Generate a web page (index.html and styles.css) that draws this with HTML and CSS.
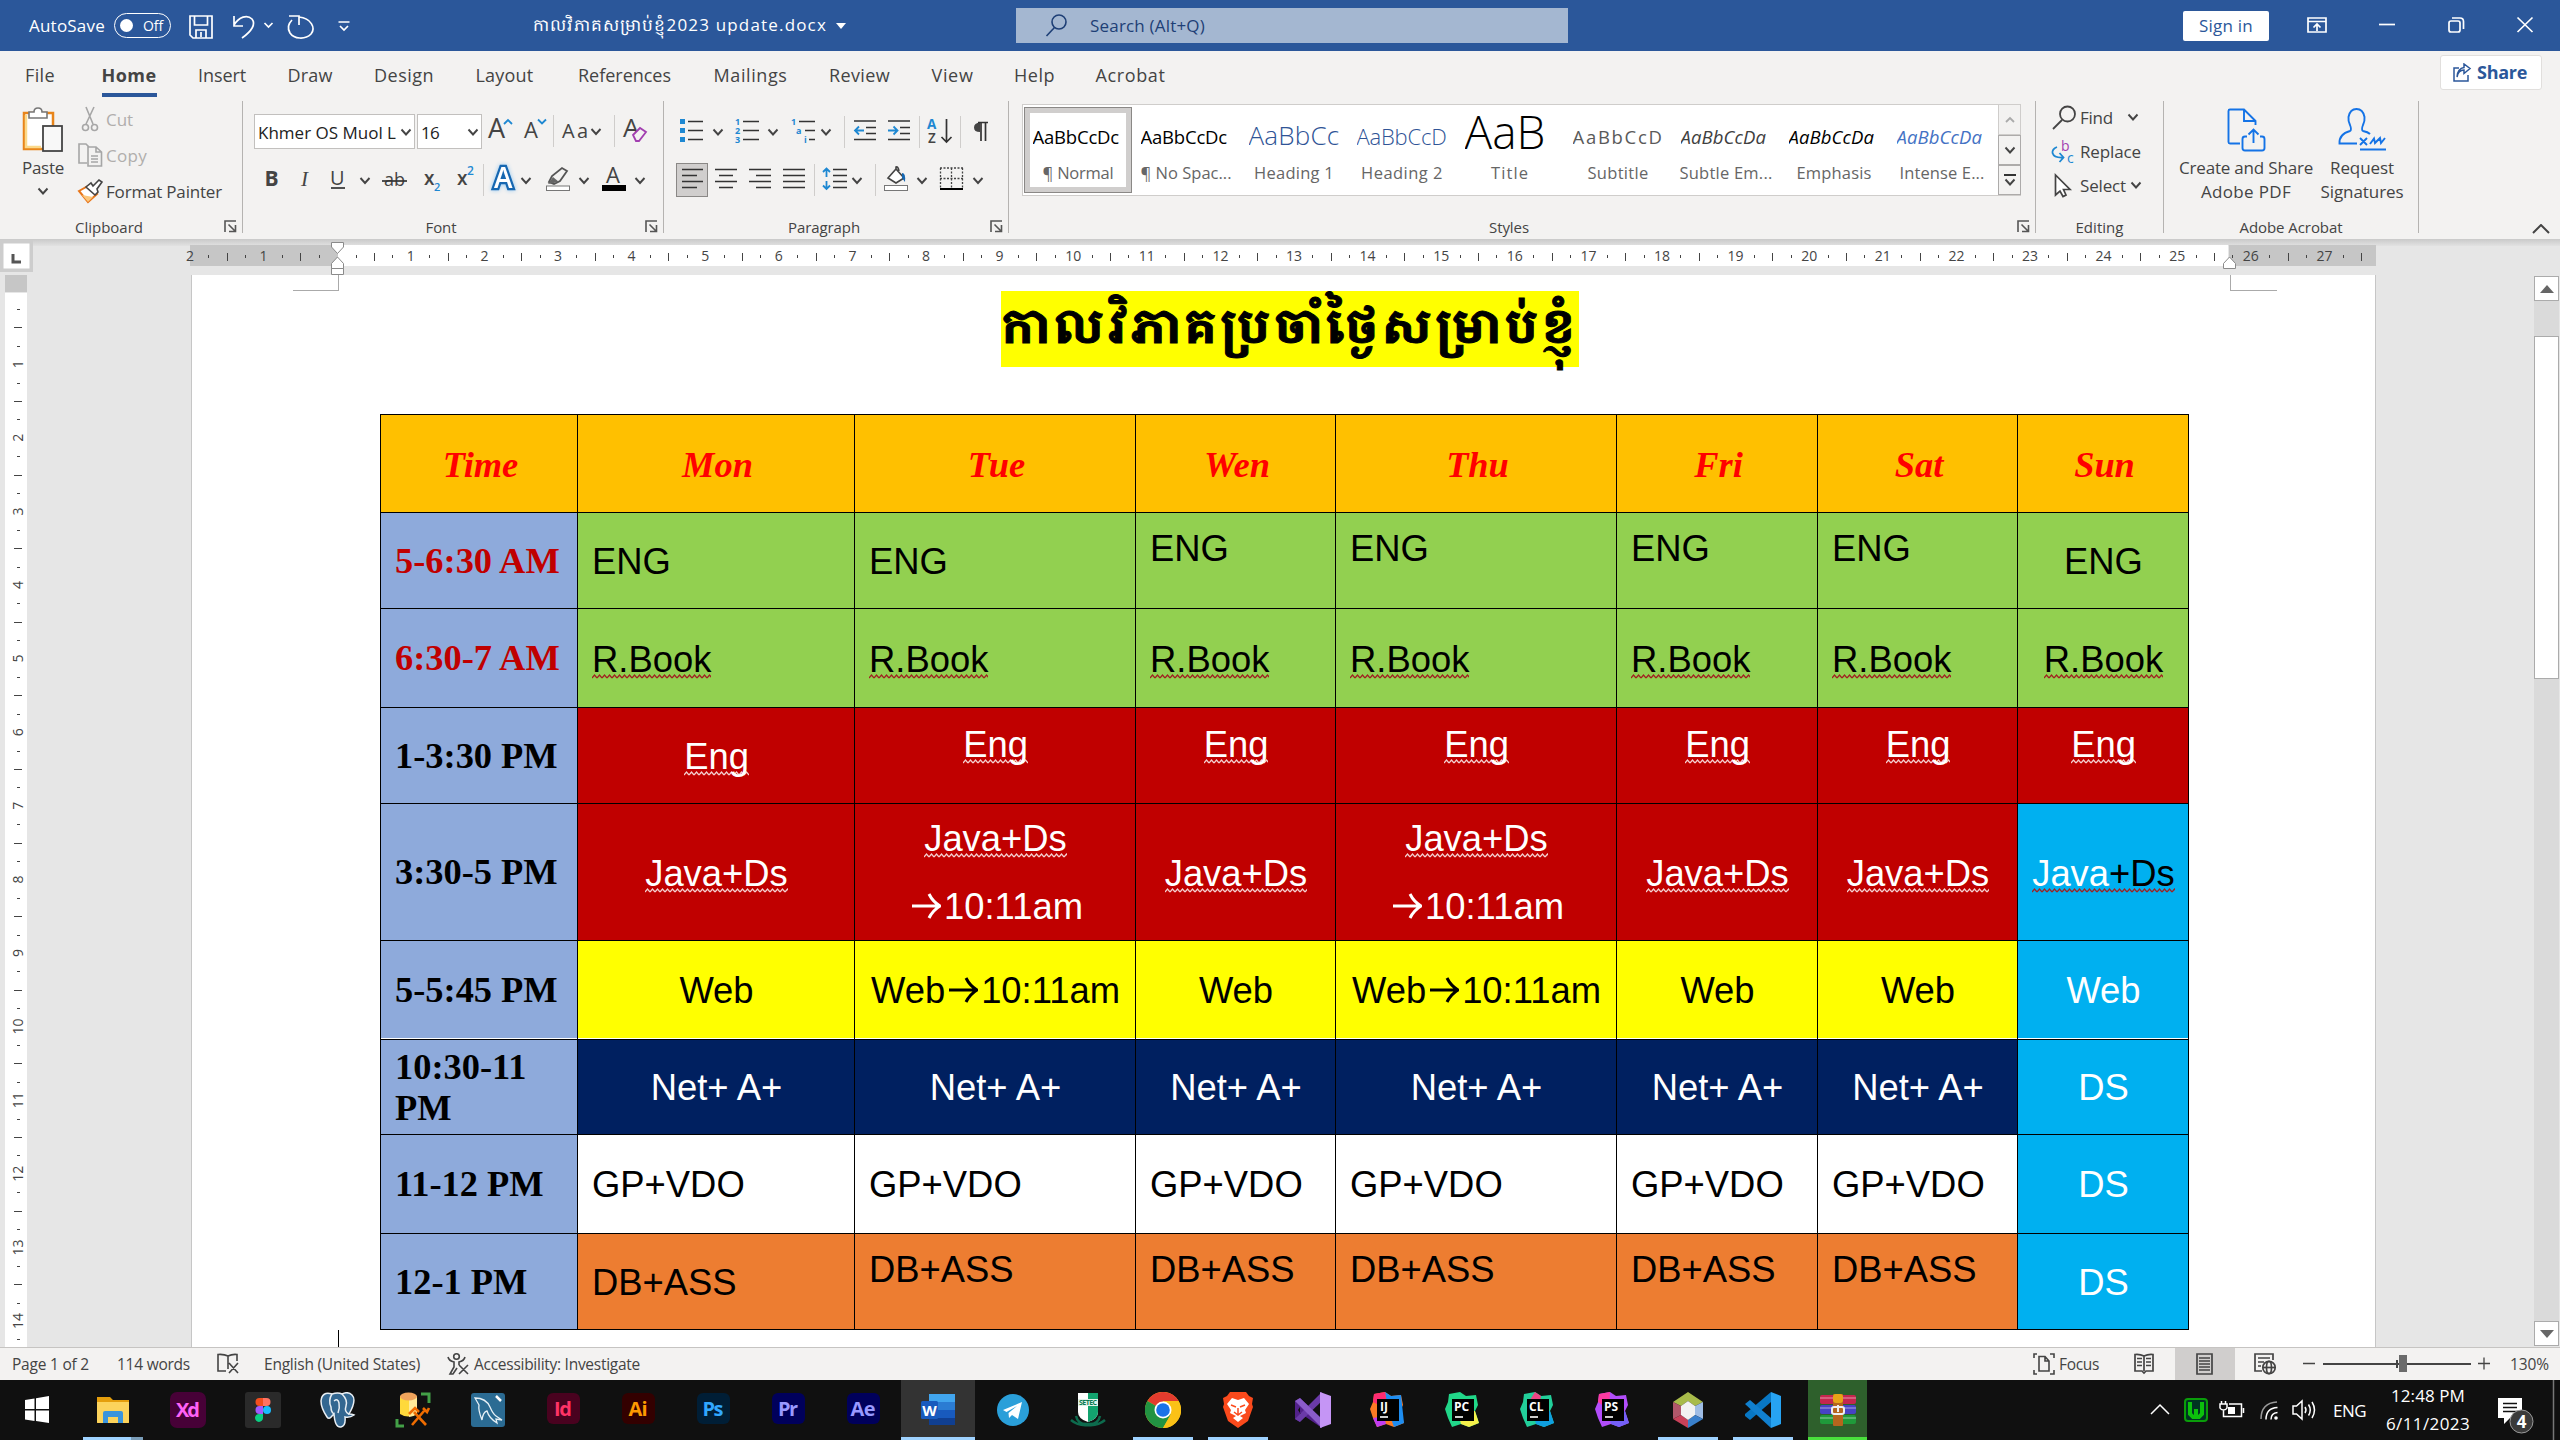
FILE: index.html
```html
<!DOCTYPE html>
<html lang="en">
<head>
<meta charset="utf-8">
<title>Word</title>
<link rel="stylesheet" href="styles.css">
</head>
<body>
<svg class="defs" width="0" height="0">
  <defs>
    <path id="car" d="M-4.5,-2.5 L0,2.5 L4.5,-2.5" fill="none" stroke="#444" stroke-width="1.9"/>
    <g id="launch" fill="none" stroke="#555" stroke-width="1.6"><path d="M1,12V1H12"/><path d="M4.5,4.5L11,11M11.5,5V11.5H5"/></g>
    <path id="arrow" d="M1,13H29M18,1C21,7 24,10 29,13C24,16 21,19 18,25" fill="none" stroke="currentColor" stroke-width="3"/>
    <path id="blob" d="M4,2L15,0L21,4L31,3L33,13L30,19L34,31L24,35L16,32L7,35L3,26L0,17L3,10Z"/>
  </defs>
</svg>

<header class="titlebar">
  <span class="autosave" data-w="76">AutoSave</span>
  <span class="toggle"><i class="knob"></i><span data-w="20">Off</span></span>
  <svg class="quick" width="170" height="51" viewBox="186 0 170 51" fill="none" stroke="#fff" stroke-width="1.7">
    <path d="M190,16H212V38H193L190,35ZM194.500,16V25H207.500V16M196,38V30H206V38M201,32V37"/>
    <path d="M234,16V26H243M234,25C239,17 247,14 252,19C256,24 252,31 242,38"/>
    <path d="M264.500,23L268.500,27L272.500,23"/>
    <path d="M289,16H299V25M299,17C311,18 316,28 311,34C305,40 294,39 290,33C287,28 289,23 292,20"/>
    <path d="M338.500,22H349.500M340,26L344,30L348,26"/>
  </svg>
  <div class="docname"><span data-w="294">កាលវិភាគសម្រាប់ខ្ញុំ2023 update.docx</span><i class="tri"></i></div>
  <div class="search">
    <svg width="24" height="26" viewBox="0 0 24 26" fill="none" stroke="#1e3f76" stroke-width="1.6"><circle cx="14" cy="9" r="7"/><path d="M9.500,14.500L1.500,23"/></svg>
    <span data-w="115">Search (Alt+Q)</span>
  </div>
  <div class="signin"><span data-w="54">Sign in</span></div>
  <svg class="winbtns" width="240" height="51" viewBox="2300 0 240 51" fill="none" stroke="#fff" stroke-width="1.7">
    <path d="M2308,18H2326V32H2308ZM2308,21.500H2326M2317,31V24.500M2313.500,27.500L2317,24L2320.500,27.500"/>
    <path d="M2379,24.500H2395"/>
    <rect x="2449" y="21" width="11" height="11" rx="2"/><path d="M2452,18H2460Q2463.500,18 2463.500,21.500V29"/>
    <path d="M2517.500,17.500L2532.500,32M2532.500,17.500L2517.500,32"/>
  </svg>
</header>

<nav class="tabs">
  <span class="tab" data-w="30">File</span>
  <span class="tab active" data-w="55">Home</span>
  <span class="tab" data-w="48">Insert</span>
  <span class="tab" data-w="45">Draw</span>
  <span class="tab" data-w="60">Design</span>
  <span class="tab" data-w="58">Layout</span>
  <span class="tab wide" data-w="93">References</span>
  <span class="tab mid" data-w="74">Mailings</span>
  <span class="tab" data-w="61">Review</span>
  <span class="tab" data-w="42">View</span>
  <span class="tab near" data-w="41">Help</span>
  <span class="tab near" data-w="70">Acrobat</span>
  <div class="share">
    <svg width="20" height="20" viewBox="0 0 20 20" fill="none" stroke="#2b579a" stroke-width="1.5"><path d="M7,5H2V18H16V12"/><path d="M5,14C6,9 9,7 12,7V10.500L18,5.500L12,1V4.500C8,5 5,9 5,14Z"/></svg>
    <span data-w="50">Share</span>
  </div>
</nav>

<section class="ribbon">
  <div class="group clipboard">
    <div class="body">
      <div class="paste">
        <svg width="44" height="50" viewBox="25 105 44 50"><rect x="28" y="113" width="29" height="36" fill="#fff" stroke="#e8851a" stroke-width="2.500"/><path d="M30,115V147H45" fill="none" stroke="#fbd98a" stroke-width="2.500"/><path d="M33,118V112H38Q38,108 42,108Q46,108 46,112H51V118Z" fill="#fff" stroke="#777" stroke-width="1.600"/><rect x="47" y="126" width="19" height="25" fill="#f8f8f8" stroke="#444" stroke-width="1.800"/></svg>
        <span data-w="42">Paste</span>
        <svg width="12" height="8"><use href="#car" x="6" y="4"/></svg>
      </div>
      <div class="cliplist">
        <div class="off"><svg width="26" height="28" viewBox="77 105 26 28" fill="none" stroke="#a6a6a6" stroke-width="1.600"><path d="M86,107L93,124M94,107L86,124"/><circle cx="85.500" cy="127.500" r="3"/><circle cx="94.500" cy="127.500" r="3"/></svg><span data-w="27">Cut</span></div>
        <div class="off"><svg width="26" height="28" viewBox="77 141 26 28" fill="none" stroke="#a6a6a6" stroke-width="1.600"><path d="M87,163H79V144H86L89,147"/><path d="M88,147H96L101.500,152V166H88ZM96,147V152H101M91,156H98M91,159H98M91,162H98"/></svg><span data-w="41">Copy</span></div>
        <div><svg width="26" height="28" viewBox="77 176 26 28"><path d="M79,190L88,185L97,193L88,201Z" fill="#fff" stroke="#e8761a" stroke-width="2"/><path d="M82,194L93,196L88,201Z" fill="#fbc77c"/><path d="M86,186L91,182L93,185L99,179L102,181L97,188L98,191L95,194Z" fill="#fff" stroke="#444" stroke-width="1.600"/></svg><span data-w="116">Format Painter</span></div>
      </div>
    </div>
    <div class="foot"><span data-w="68">Clipboard</span><svg width="14" height="14"><use href="#launch"/></svg></div>
  </div>

  <div class="group font">
    <div class="body col">
      <div class="row1">
        <div class="combo"><span data-w="138">Khmer OS Muol L</span><svg width="12" height="8"><use href="#car" x="6" y="4"/></svg></div>
        <div class="combo small"><span data-w="18">16</span><svg width="12" height="8"><use href="#car" x="6" y="4"/></svg></div>
        <svg width="172" height="42" viewBox="484 110 172 42" class="ic">
          <text x="489" y="138" font-size="27" textLength="16">A</text><path d="M505,124L509,120L513,124" class="bl"/>
          <text x="525" y="138" font-size="22" textLength="14">A</text><path d="M539,119.500L543,123.500L547,119.500" class="bl"/>
          <path d="M554.500,115V147M615.500,115V147" class="sp"/>
          <text x="563" y="138" font-size="20" textLength="26">Aa</text><use href="#car" x="597" y="131.500"/>
          <text x="624" y="137" font-size="26" textLength="15">A</text><path d="M634,135L641,128L647,132L640,141H637Z" fill="#f3f2f1" stroke="#a23fb0" stroke-width="1.800"/>
        </svg>
      </div>
      <svg width="410" height="44" viewBox="250 158 410 44" class="ic">
        <text x="264.500" y="186" font-size="21" font-weight="700" textLength="13">B</text>
        <text x="301" y="186" font-size="21" font-style="italic" font-family="Liberation Serif">I</text>
        <text x="330" y="185" font-size="20" textLength="15">U</text><path d="M331,188H345" class="dk"/>
        <use href="#car" x="365" y="180.500"/>
        <text x="384" y="186" font-size="18" textLength="21">ab</text><path d="M382,181H407" class="dk"/>
        <text x="424" y="185" font-size="19" font-weight="600" textLength="10">x</text><text x="434" y="191" font-size="11" fill="#1e88d2" font-weight="600">2</text>
        <text x="457" y="185" font-size="19" font-weight="600" textLength="10">x</text><text x="467" y="175" font-size="12" fill="#1e88d2" font-weight="600">2</text>
        <path d="M483.500,164V196" class="sp"/>
        <text x="494" y="188" font-size="28" font-weight="600" stroke="#1667b1" stroke-width="4.500" fill="#fff" paint-order="stroke" class="glow">A</text>
        <use href="#car" x="526" y="180.500"/>
        <path d="M549,182L552,176L562,168L567,171L560,181L554,184Z" fill="none" stroke="#555" stroke-width="1.800"/><path d="M548,184L553,177L559,182Z" fill="#666"/><rect x="546.500" y="186" width="23" height="4.500" fill="#fff" stroke="#777"/>
        <use href="#car" x="584" y="180.500"/>
        <text x="606" y="183" font-size="22" textLength="15">A</text><rect x="602" y="185" width="24" height="6" fill="#000"/>
        <use href="#car" x="640" y="180.500"/>
      </svg>
    </div>
    <div class="foot"><span data-w="31">Font</span><svg width="14" height="14"><use href="#launch"/></svg></div>
  </div>

  <div class="group para">
    <div class="body">
      <svg width="344" height="114" viewBox="664 101 344 114" class="ic">
        <g fill="#1e88d2"><rect x="680" y="119" width="5" height="5"/><rect x="680" y="128" width="5" height="5"/><rect x="680" y="137" width="5" height="5"/></g>
        <path d="M688,121.500H703M688,130.500H703M688,139.500H703" class="dk"/><use href="#car" x="718" y="132"/>
        <g fill="#1e88d2" font-size="9" font-weight="700"><text x="735" y="125">1</text><text x="735" y="134">2</text><text x="735" y="143">3</text><text x="791" y="125">1</text><text x="796" y="134">a</text><text x="804" y="143">i</text></g>
        <path d="M743,121.500H759M743,130.500H759M743,139.500H759M799,121.500H815M805,130.500H815M809,139.500H815" class="dk"/><use href="#car" x="773" y="132"/><use href="#car" x="826" y="132"/>
        <path d="M844.500,116V148M919.500,116V148M960.500,116V148M814.500,164V196M875.500,164V196" class="sp"/>
        <path d="M854,121H876M866,127.500H876M866,133.500H876M854,139.500H876M888,121H910M900,127.500H910M900,133.500H910M888,139.500H910" class="dk"/>
        <path d="M864,130.500H855M859,126.500L855,130.500L859,134.500M888,130.500H897M893.500,126.500L897.500,130.500L893.500,134.500" class="bl"/>
        <text x="927" y="129" font-size="13.500" font-weight="700" fill="#1e88d2" textLength="11">A</text><text x="928" y="143" font-size="13.500" font-weight="600" textLength="9">Z</text>
        <path d="M946.500,119V142M941.500,137L946.500,142L951.500,137" class="dk"/>
        <path d="M988,122.500H980Q974,123 974,127.500Q974,132 980,132V122" fill="#444"/><path d="M981,122V141M985.500,122V141M978,122.500H988" class="dk"/>
        <rect x="676.500" y="163.500" width="31" height="33" fill="#d0cecd" stroke="#8a8886"/>
        <path d="M682,169.500H703M682,175.500H697M682,181.500H703M682,187.500H697M715,169.500H737M719,175.500H733M715,181.500H737M719,187.500H733M749,169.500H771M756,175.500H771M749,181.500H771M756,187.500H771M783,169.500H805M783,175.500H805M783,181.500H805M783,187.500H805M833,169.500H847M833,175.500H847M833,181.500H847M833,187.500H847" class="dk"/>
        <path d="M826.500,169V177M823,172L826.500,168.500L830,172M826.500,181V189M823,185.500L826.500,189L830,185.500" class="bl"/><use href="#car" x="857" y="180.500"/>
        <path d="M888,178L896,169L904,178L896,183ZM896,169V167Q898,166 899,171" fill="#fff" stroke="#444" stroke-width="1.600"/><path d="M902,173Q906,173 905,182L902,178Z" fill="#1667b1"/><rect x="884.500" y="185.500" width="23" height="5" fill="#fff" stroke="#777"/><use href="#car" x="922" y="180.500"/>
        <path d="M940,168H963M940.500,168V188M962.500,168V188M951.500,168V188M940,178.500H963" fill="none" stroke="#444" stroke-width="1.300" stroke-dasharray="2 1.500"/><path d="M940,189H963" stroke="#000" stroke-width="2"/><use href="#car" x="978" y="180.500"/>
      </svg>
    </div>
    <div class="foot"><span data-w="72">Paragraph</span><svg width="14" height="14"><use href="#launch"/></svg></div>
  </div>

  <div class="group styles">
    <div class="body">
      <div class="gallery">
        <div class="tile sel"><b>AaBbCcDc</b><span data-w="71">¶ Normal</span></div>
        <div class="tile"><b>AaBbCcDc</b><span data-w="91">¶ No Spac...</span></div>
        <div class="tile h1"><b>AaBbCc</b><span data-w="80">Heading 1</span></div>
        <div class="tile h2"><b>AaBbCcD</b><span data-w="82">Heading 2</span></div>
        <div class="tile ti"><b>AaB</b><span data-w="38">Title</span></div>
        <div class="tile su"><b>AaBbCcD</b><span data-w="61">Subtitle</span></div>
        <div class="tile em dim"><b>AaBbCcDa</b><span data-w="93">Subtle Em...</span></div>
        <div class="tile em"><b>AaBbCcDa</b><span data-w="75">Emphasis</span></div>
        <div class="tile em blue"><b>AaBbCcDa</b><span data-w="85">Intense E...</span></div>
        <div class="gscroll"><i class="dis"><svg width="12" height="8"><path d="M2,6L6,2L10,6" fill="none" stroke="#aaa" stroke-width="1.800"/></svg></i><i><svg width="12" height="8"><use href="#car" x="6" y="4"/></svg></i><i><svg width="12" height="12"><path d="M0,1H12" stroke="#333" stroke-width="2"/><use href="#car" x="6" y="8"/></svg></i></div>
      </div>
    </div>
    <div class="foot"><span data-w="40">Styles</span><svg width="14" height="14"><use href="#launch"/></svg></div>
  </div>

  <div class="group editing">
    <div class="body col">
      <div class="line"><svg width="26" height="26" viewBox="2051 102 26 26" fill="none" stroke="#444" stroke-width="1.800"><circle cx="2067.500" cy="112" r="7.500"/><path d="M2062,118L2053,127"/></svg><span data-w="33">Find</span><svg class="c2" width="12" height="8"><use href="#car" x="6" y="4"/></svg></div>
      <div class="line"><svg width="26" height="28" viewBox="2051 136 26 28" class="ic"><text x="2061" y="150" font-size="14" fill="#a23fb0">b</text><text x="2067" y="162" font-size="14" fill="#1e88d2">c</text><path d="M2057,146Q2052,148 2052.500,152Q2054,157 2063,156.500M2059.500,152L2063.500,156.500L2059.500,161" class="bl"/></svg><span data-w="61">Replace</span></div>
      <div class="line"><svg width="26" height="28" viewBox="2051 170 26 28" fill="#fff" stroke="#444" stroke-width="1.700"><path d="M2055.500,174V194L2060,190L2063,195.500L2066,194L2063.500,188.500H2070Z"/></svg><span data-w="46">Select</span><svg class="c3" width="12" height="8"><use href="#car" x="6" y="4"/></svg></div>
    </div>
    <div class="foot"><span data-w="48">Editing</span></div>
  </div>

  <div class="group acro">
    <div class="body">
      <div class="big"><svg width="44" height="46" viewBox="2229 108 44 46" fill="none" stroke="#1473e6" stroke-width="1.900"><path d="M2245,144.500H2235Q2233.500,144.500 2233.500,143V112Q2233.500,110.500 2235,110.500H2249L2260.500,122V126M2249,110.500V122H2260.500"/><path d="M2252,137.500H2250Q2247.500,137.500 2247.500,140V149Q2247.500,151.500 2250,151.500H2267Q2269.500,151.500 2269.500,149V140Q2269.500,137.500 2267,137.500H2265M2258.500,144V131M2253.500,135.500L2258.500,130.500L2263.500,135.500"/></svg><span data-w="134">Create and Share</span><span data-w="90">Adobe PDF</span></div>
      <div class="big r"><svg width="50" height="46" viewBox="2337 108 50 46" fill="none" stroke="#1473e6" stroke-width="1.900"><path d="M2357,144.500H2339.500Q2339,135 2350,132Q2352,131 2350,126Q2348,122 2348.500,118Q2350,110 2356.500,110Q2363,110 2364.500,118Q2365,122 2363,126Q2361,131 2363,132Q2368,133 2370,135"/><path d="M2360,139L2367,146M2367,139L2360,146M2370,145L2374,139.500L2375,144L2380,139L2381,144L2385,139M2360,150.500H2386"/></svg><span data-w="64">Request</span><span data-w="83">Signatures</span></div>
    </div>
    <div class="foot"><span data-w="103">Adobe Acrobat</span></div>
  </div>
  <svg class="collapse" width="18" height="10" fill="none" stroke="#444" stroke-width="2"><path d="M1,9L9,1L17,9"/></svg>
</section>

<main class="workspace">
  <svg class="hruler" id="hruler" width="2560" height="36" viewBox="0 239 2560 36"></svg>
  <div class="desk">
    <svg class="vruler" id="vruler" width="192" height="1072" viewBox="0 275 192 1072"></svg>
    <article class="page">
      <div class="margins"><i class="ml"></i><i class="mr"></i></div>
      <h1><span class="heading" data-w="576">កាលវិភាគប្រចាំថ្ងៃសម្រាប់ខ្ញុំ</span></h1>
      <div class="sheet" id="sheet"></div>
      <i class="cursor"></i>
    </article>
    <div class="scroll">
      <i class="sb"><svg width="14" height="8"><path d="M0,8L7,0L14,8Z" fill="#666"/></svg></i>
      <i class="thumb"></i>
      <i class="sb end"><svg width="14" height="8"><path d="M0,0L7,8L14,0Z" fill="#666"/></svg></i>
    </div>
  </div>
</main>

<footer class="status">
  <span data-w="77">Page 1 of 2</span>
  <span class="s2" data-w="73">114 words</span>
  <svg class="s3" width="24" height="24" viewBox="216 1353 24 24" fill="none" stroke="#444" stroke-width="1.600"><path d="M228,1357V1370M228,1357Q224,1355 218,1355.500V1372H226M228,1357Q232,1355 237,1355.500V1362M229,1364L238,1374M238,1364L229,1374"/></svg>
  <span class="s4" data-w="156">English (United States)</span>
  <svg class="s5" width="24" height="24" viewBox="446 1352 24 24" fill="none" stroke="#444" stroke-width="1.600"><circle cx="456.500" cy="1356.500" r="2.800"/><path d="M448,1357Q449,1361 454,1362V1367L450,1374H453L457,1368M465,1357Q464,1361 459,1362V1365M459,1365L468,1374M468,1365L459,1374"/></svg>
  <span data-w="166">Accessibility: Investigate</span>
  <div class="views">
    <svg width="24" height="24" viewBox="2032 1352 24 24" fill="none" stroke="#444" stroke-width="1.600"><path d="M2037,1354H2034V1358M2034,1370V1374H2037M2050,1354H2054V1358M2054,1370V1374H2050M2039,1356.500H2045L2049,1361V1371H2039ZM2045,1356.500V1361H2049"/></svg>
    <span data-w="40">Focus</span>
    <svg class="v2" width="24" height="24" viewBox="2132 1352 24 24" fill="none" stroke="#444" stroke-width="1.700"><path d="M2144,1356Q2140,1354 2135,1354.500V1371H2142L2144,1373L2146,1371H2153V1354.500Q2148,1354 2144,1356V1371M2137,1358.500H2142M2137,1362H2142M2137,1365.500H2142M2146,1358.500H2151M2146,1362H2151M2146,1365.500H2151"/></svg>
    <div class="v3"><svg width="24" height="24" viewBox="2193 1352 24 24" fill="none" stroke="#444" stroke-width="1.700"><path d="M2197,1354H2212V1374H2197ZM2199,1358H2210M2199,1361H2210M2199,1364H2210M2199,1367H2210M2199,1370H2210"/></svg></div>
    <svg class="v4" width="24" height="24" viewBox="2253 1352 24 24" fill="none" stroke="#444" stroke-width="1.700"><path d="M2262,1371H2255V1354H2273V1360M2258,1358H2270M2258,1362H2264M2258,1366H2261"/><circle cx="2269" cy="1367.500" r="6.200"/><ellipse cx="2269" cy="1367.500" rx="2.500" ry="6.200"/><path d="M2263,1367.500H2275"/></svg>
    <svg class="v5" width="190" height="24" viewBox="2302 1352 190 24" fill="none" stroke="#444" stroke-width="1.300"><path d="M2303,1363.500H2315M2478,1363.500H2490M2484,1357.500V1369.500"/><path d="M2323,1364H2471M2397,1360V1368" stroke-width="2"/><rect x="2399" y="1355" width="8" height="17" fill="#6b6b6b" stroke="none"/></svg>
    <span data-w="39">130%</span>
  </div>
</footer>

<div class="taskbar">
  <div class="app"><svg viewBox="0 0 36 36"><path d="M5,8L14.500,6.500V17H5ZM16,6.300L29,4V17H16ZM5,18.500H14.500V29L5,27.500ZM16,18.500H29V31L16,29Z" fill="#fff"/></svg></div>
  <div class="app run split"><svg viewBox="0 0 36 36"><path d="M2,5H15L18,8H34V31H2Z" fill="#e59e0c"/><path d="M2,10H34V30Q34,31 33,31H3Q2,31 2,30Z" fill="#fcd35c"/><path d="M8,31V21Q8,19 10,19H26Q28,19 28,21V31H23V25H13V31Z" fill="#3a94dd"/></svg></div>
  <div class="app"><svg viewBox="0 0 36 36"><rect width="36" height="36" rx="7" fill="#470137"/><text x="18" y="25" fill="#ff61f6" textLength="24">Xd</text></svg></div>
  <div class="app"><svg viewBox="0 0 36 36"><rect width="36" height="36" rx="3" fill="#2a2a2a"/><path d="M18,6H14.500A4,4 0 0 0 14.500,14H18Z" fill="#f24e1e"/><path d="M18,6H21.500A4,4 0 0 1 21.500,14H18Z" fill="#ff7262"/><path d="M18,14H14.500A4,4 0 0 0 14.500,22H18Z" fill="#a259ff"/><circle cx="22" cy="18" r="4" fill="#1abcfe"/><path d="M18,22H14.500A4,4 0 1 0 18,26Z" fill="#0acf83"/></svg></div>
  <div class="app"><svg viewBox="0 0 36 36" fill="#336791" stroke="#e8eef3" stroke-width="1.500"><path d="M12,2Q2,-1 1,9Q1,16 7,25Q9,28 12,24L14,22Q15,36 21,35Q26,34 25,25Q30,26 34,23Q32,22 29,22Q37,8 32,3Q28,-1 22,2Q18,0 12,2Z"/><path d="M12,2Q8,8 11,15Q11,20 14,22M22,2Q28,8 26,14Q24,20 29,22M14,9Q18,6 19,11Q20,16 18,21" fill="none"/></svg></div>
  <div class="app"><svg viewBox="0 0 36 36"><path d="M5,4V22Q13,27 22,22V4Z" fill="#ffd93b"/><path d="M14,4V25Q18,25 22,22V4Z" fill="#ffeb99"/><ellipse cx="13.500" cy="4.500" rx="8.500" ry="4" fill="#f0a45c"/><path d="M26,2H34V11M2,27V34H9" fill="none" stroke="#43a047" stroke-width="3"/><path d="M17,33L29,19M19,20L31,33M14,22L20,16L24,20M28,16L32,20L34,16" fill="none" stroke="#ef6c00" stroke-width="2.600"/></svg></div>
  <div class="app"><svg viewBox="0 0 36 36"><rect x="1" y="1" width="34" height="34" rx="3" fill="#2b6b93"/><path d="M5,6Q16,6 20,15Q23,22 26,24L32,28L26,27L27,31Q19,26 17,19Q13,20 12,28Q8,18 9,13Z" fill="#2b6b93" stroke="#e6f0f6" stroke-width="1.300"/><path d="M26,4L31,9" stroke="#fff" stroke-width="2.500"/></svg></div>
  <div class="app"><svg viewBox="0 0 36 36"><rect x="2" y="1" width="33" height="31" rx="6" fill="#49021f"/><text x="18" y="24" fill="#ff3366" textLength="18">Id</text></svg></div>
  <div class="app"><svg viewBox="0 0 36 36"><rect x="2" y="1" width="33" height="31" rx="6" fill="#330000"/><text x="18" y="24" fill="#ff9a00" textLength="19">Ai</text></svg></div>
  <div class="app"><svg viewBox="0 0 36 36"><rect x="2" y="1" width="33" height="31" rx="6" fill="#001e36"/><text x="18" y="24" fill="#31a8ff" textLength="21">Ps</text></svg></div>
  <div class="app"><svg viewBox="0 0 36 36"><rect x="2" y="1" width="33" height="31" rx="6" fill="#00005b"/><text x="18" y="24" fill="#9999ff" textLength="20">Pr</text></svg></div>
  <div class="app"><svg viewBox="0 0 36 36"><rect x="2" y="1" width="33" height="31" rx="6" fill="#00005b"/><text x="18" y="24" fill="#9999ff" textLength="25">Ae</text></svg></div>
  <div class="app run cur"><svg viewBox="0 0 36 36"><rect x="9" y="2" width="26" height="8" fill="#41a5ee"/><rect x="9" y="10" width="26" height="8" fill="#2b7cd3"/><rect x="9" y="18" width="26" height="8" fill="#185abd"/><rect x="9" y="26" width="26" height="7" fill="#103f91"/><rect x="1" y="9" width="17" height="18" rx="1.500" fill="#185abd"/><text class="wd" x="9.500" y="23.500" fill="#fff" textLength="13">W</text></svg></div>
  <div class="app"><svg viewBox="0 0 36 36"><circle cx="18" cy="18" r="16" fill="#2a9fd9"/><path d="M8,18L27,10L23,27L17,23L14,26L13.500,21L22,14L11.500,20Z" fill="#fff"/></svg></div>
  <div class="app"><svg viewBox="0 0 36 36"><path d="M8,1H28V20Q28,27 18,30Q8,27 8,20Z" fill="#fff"/><path d="M18,1H28V20Q28,27 18,30Z" fill="#13a36f"/><rect x="8" y="7" width="20" height="7" fill="#dff3ea"/><text class="st" x="18" y="13.300" fill="#0a7a50" textLength="18">SETEC</text><path d="M1,28Q8,34 18,33Q28,34 35,28M6,24Q8,33 18,32Q28,33 30,24" fill="none" stroke="#0d6b4d" stroke-width="2.500"/></svg></div>
  <div class="app run r2"><svg viewBox="0 0 36 36"><circle cx="18" cy="18" r="18" fill="#fbc116"/><path d="M18,18L2.400,9A18,18 0 0 1 33.600,9Z" fill="#e33b2e"/><path d="M2.400,9A18,18 0 0 0 18,36L25.800,22.500L18,18Z" fill="#229342"/><path d="M33.600,9H18V18L25.800,22.500L18,36A18,18 0 0 0 33.600,9Z" fill="#fbc116"/><circle cx="18" cy="18" r="8.500" fill="#fff"/><circle cx="18" cy="18" r="6.800" fill="#1a73e8"/></svg></div>
  <div class="app run r2"><svg viewBox="0 0 36 36"><path d="M10,0H26L29,4L33,6L32,12L33,15L28,29L18,36L8,29L3,15L4,12L3,6L7,4Z" fill="#fb4a1c"/><path d="M18,8L24,6L29,12L25,18L26,21L20,24L23,26L18,30L13,26L16,24L10,21L11,18L7,12L12,6Z" fill="#fff"/><path d="M11,13L16,15M25,13L20,15M18,16V22M14,20L18,23L22,20" stroke="#fb4a1c" stroke-width="1.500" fill="none"/></svg></div>
  <div class="app"><svg viewBox="0 0 36 36"><path d="M0,9L5,6L27,27V36L5,21V15L3,18L5,21V30L0,27Z" fill="#52218a"/><path d="M0,27L5,30L27,9V0Z" fill="#6a3aa8"/><path d="M0,9L5,6L27,27V36Z" fill="#8a5cc9"/><path d="M25,0L36,4V32L25,36Z" fill="#c595f5"/></svg></div>
  <div class="app"><svg viewBox="0 0 36 36"><use href="#blob" fill="#fc7a24"/><path d="M15,0L21,4L31,3L34,31L24,35L18,18Z" fill="#1e8df0"/><path d="M4,2L15,0L18,18L3,10Z" fill="#fe2b73"/><path d="M3,26L7,35L16,32L14,24Z" fill="#c13cf0"/><rect x="7" y="7" width="22" height="22"/><text class="jb" x="10" y="18.500">IJ</text><path d="M10,25H18" stroke="#fff" stroke-width="1.600"/></svg></div>
  <div class="app"><svg viewBox="0 0 36 36"><use href="#blob" fill="#21d789"/><path d="M30,19L34,31L24,35L16,32L12,18Z" fill="#f5f04a"/><rect x="7" y="7" width="22" height="22"/><text class="jb" x="9" y="18.500">PC</text><path d="M10,25H18" stroke="#fff" stroke-width="1.600"/></svg></div>
  <div class="app"><svg viewBox="0 0 36 36"><use href="#blob" fill="#22cf9a"/><path d="M21,4L15,0L10,8L20,9Z" fill="#ec4585"/><path d="M30,19L34,31L24,35L16,32L12,18Z" fill="#0f9fe0"/><rect x="7" y="7" width="22" height="22"/><text class="jb" x="9" y="18.500">CL</text><path d="M10,25H18" stroke="#fff" stroke-width="1.600"/></svg></div>
  <div class="app"><svg viewBox="0 0 36 36"><use href="#blob" fill="#b24dfa"/><path d="M4,2L15,0L14,18L3,10Z" fill="#fb3aa0"/><path d="M30,19L34,31L24,35L16,32L12,18Z" fill="#7460f8"/><rect x="7" y="7" width="22" height="22"/><text class="jb" x="9" y="18.500">PS</text><path d="M10,25H18" stroke="#fff" stroke-width="1.600"/></svg></div>
  <div class="app run r2"><svg viewBox="0 0 36 36"><path d="M18,0L33,10L25,14L18,9L11,14L3,10Z" fill="#a8bb4a"/><path d="M3,10L11,14V23L3,27Z" fill="#b0576a"/><path d="M3,27L11,23L18,28V36Z" fill="#c9415a"/><path d="M33,10L25,14V23L33,27Z" fill="#9fbde5"/><path d="M33,27L25,23L18,28V36Z" fill="#3a80cc"/><path d="M11,14L18,9L25,14V23L18,28L11,23Z" fill="#f2f2f2"/></svg></div>
  <div class="app run r2"><svg viewBox="0 0 36 36"><path d="M26,0V10L5,28L0,24V22Z" fill="#0877c4"/><path d="M0,12L5,8L26,26V36Z" fill="#1180cf"/><path d="M26,0L36,4V32L26,36Z" fill="#27a3f2"/></svg></div>
  <div class="app run rar"><svg viewBox="0 0 36 36"><rect x="0" y="3" width="36" height="9" rx="2" fill="#c4264e"/><rect x="0" y="13" width="36" height="9" rx="2" fill="#4743c4"/><rect x="0" y="23" width="36" height="9" rx="2" fill="#1f9a3a"/><path d="M0,6H36M0,16H36M0,26H36" stroke="#fff" stroke-opacity=".35" stroke-width="1.500"/><rect x="13" y="2" width="10" height="32" rx="1" fill="#b5651d"/><rect x="13" y="2" width="10" height="9" rx="3" fill="#e8a317"/><rect x="12" y="15" width="12" height="7" rx="2" fill="none" stroke="#eee" stroke-width="2"/><path d="M18,13V20" stroke="#eee" stroke-width="2"/></svg></div>
  <div class="tray">
    <svg width="172" height="60" viewBox="2148 1380 172 60" fill="none" stroke="#fff" stroke-width="1.500">
      <path d="M2151,1414L2160,1405L2169,1414"/>
      <rect x="2185" y="1399" width="22" height="22" rx="3" fill="#032" stroke="#0a9c0a" stroke-width="2"/><path d="M2190,1402V1414L2193,1417H2199L2202,1414V1402M2196,1409V1416" stroke="#0cc00c" stroke-width="4"/>
      <path d="M2227,1416.500H2241.500V1404H2229M2243.500,1408V1413M2220,1404H2227V1408Q2226,1410 2223.500,1410Q2221,1410 2220,1408ZM2221.500,1401V1404M2225.500,1401V1404M2223.500,1410V1416.500H2229"/><rect x="2228" y="1407" width="7" height="7" fill="#fff" stroke="none"/>
      <g stroke="#999"><path d="M2261,1419Q2261,1403 2277,1402"/></g><path d="M2266,1419.500Q2266,1408 2277.500,1407.500M2271,1419.500Q2271,1413 2277.500,1412.500"/><circle cx="2276" cy="1418" r="1.800" fill="#fff" stroke="none"/>
      <path d="M2293,1406H2296.500L2302,1401V1419L2296.500,1414H2293ZM2305,1407Q2307,1410 2305,1413M2308.500,1404.500Q2312,1410 2308.500,1415.500M2312,1402Q2317,1410 2312,1418"/>
    </svg>
    <span class="eng" data-w="33">ENG</span>
    <div class="clock"><span data-w="74">12:48 PM</span><span data-w="84">6/11/2023</span></div>
    <svg class="note" width="70" height="60" viewBox="2490 1380 70 60"><path d="M2498,1398H2522V1418H2510L2504,1424V1418H2498Z" fill="#fff"/><path d="M2503,1403.500H2517M2503,1407.500H2517M2503,1411.500H2517" stroke="#111" stroke-width="1.300"/><circle cx="2521.500" cy="1421.500" r="11.500" fill="#3a3a3a" stroke="#999"/><text x="2521.500" y="1428" font-size="17" font-weight="700" fill="#fff" text-anchor="middle">4</text><path d="M2553.500,1380V1440" stroke="#777" stroke-width="1.500"/></svg>
  </div>
</div>
<script src="app.js"></script>
</body>
</html>
```
FILE: styles.css
```css
* { box-sizing: border-box; }
html, body { margin: 0; width: 2560px; height: 1440px; overflow: hidden; }
body { display: flex; flex-direction: column; font-family: "Open Sans", "Noto Sans", sans-serif; font-size: 17px; color: #444; white-space: nowrap; }
i { font-style: normal; display: block; }
svg { display: block; flex: none; }
span { flex: none; }
.defs { position: absolute; }

.titlebar { height: 51px; flex: none; background: #2b579a; color: #fff; display: flex; align-items: center; padding-left: 29px; }
.toggle { margin-left: 9px; width: 57px; height: 25px; border: 1.5px solid #fff; border-radius: 13px; display: flex; align-items: center; font-size: 14px; padding-left: 5px; gap: 10px; }
.knob { width: 13px; height: 13px; border-radius: 50%; background: #fff; }
.quick { margin-left: 15px; }
.docname { margin-left: 177px; width: 483px; display: flex; align-items: center; gap: 9px; }
.tri { border: 5.5px solid transparent; border-top: 6px solid #fff; border-bottom: 0; }
.search { width: 552px; height: 35px; background: #a4b7d1; color: #1e3f76; display: flex; align-items: center; padding-left: 29px; gap: 21px; }
.signin { margin-left: 615px; width: 86px; height: 30px; border-radius: 2px; background: #fff; color: #2b579a; display: flex; align-items: center; justify-content: center; }
.winbtns { margin-left: 31px; }

.tabs { height: 49px; flex: none; background: #f3f2f1; display: flex; align-items: flex-start; padding: 10px 18px 0 25px; gap: 41.5px; font-size: 18px; line-height: 29px; }
.tab { height: 28px; }
.tab.active { font-weight: 700; box-shadow: 0 4px #f3f2f1, 0 8px #2b579a; margin-left: 5px; }
.tab.wide { margin-left: 3px; }
.tab.mid { margin-left: 1px; }
.tab.near { margin-left: -1px; }
.share { margin: -6px 0 0 auto; width: 102px; height: 35px; background: #fff; border: 1px solid #e1dfdd; border-radius: 3px; display: flex; align-items: center; padding-left: 11px; gap: 5px; color: #2b579a; font-weight: 700; }

.ribbon { height: 139px; flex: none; background: #f3f2f1; display: flex; padding-top: 1px; position: relative; }
.group { height: 132px; border-right: 1px solid #b5b3b1; display: flex; flex-direction: column; }
.body { height: 113px; display: flex; }
.body.col { flex-direction: column; }
.foot { height: 19px; display: flex; justify-content: center; align-items: center; font-size: 15px; position: relative; line-height: 19px; padding-top: 7px; }
.foot svg { position: absolute; right: 4px; bottom: -1px; }
.clipboard { width: 243px; }
.font { width: 421px; }
.para { width: 345px; }
.styles { width: 1027px; }
.editing { width: 128px; }
.acro { width: 255px; }
.clipboard .foot, .font .foot, .para .foot { padding-right: 24px; }
.paste { width: 44px; margin: 4px 0 0 21px; display: flex; flex-direction: column; align-items: center; line-height: 24px; }
.paste svg + span { margin-top: 1px; }
.paste svg:last-child { margin-top: 7px; }
.cliplist { margin: 4px 0 0 12px; display: flex; flex-direction: column; gap: 8px; }
.cliplist div { display: flex; align-items: center; height: 28px; gap: 3px; }
.cliplist span { padding-top: 1px; }
.off { color: #b0aeac; }
.row1 { display: flex; margin: 9px 0 0 11px; height: 42px; align-items: center; }
.combo { width: 161px; height: 35px; background: #fff; border: 1px solid #c2c0be; display: flex; align-items: center; justify-content: space-between; padding: 2px 2px 0 3px; color: #222; }
.combo.small { width: 65px; margin: 0 1px 0 2px; }
.font .body > svg { margin: 6px 0 0 7px; }
.ic { font-family: "Open Sans", sans-serif; fill: #444; overflow: visible; }
.ic .bl { fill: none; stroke: #1e88d2; stroke-width: 1.8; }
.ic .dk { fill: none; stroke: #333; stroke-width: 1.7; }
.ic .sp { fill: none; stroke: #cfcdcb; stroke-width: 1; }
.glow { filter: drop-shadow(0 0 2px #8fc6f2); }
.gallery { margin: 3px 0 0 13px; width: 999px; height: 92px; background: #fff; border: 1px solid #cfcdcb; display: flex; padding-left: 1px; }
.tile { width: 108px; height: 86px; margin-top: 2px; display: flex; flex-direction: column; align-items: center; color: #666; }
.tile.sel { border: 1px solid #8a8886; box-shadow: inset 0 0 0 5px #d0cecd; }
.tile.sel b { margin-top: 8px; }
.tile b { font-weight: 400; color: #000; width: 91px; height: 44px; margin-top: 9px; overflow: hidden; font-size: 18.5px; line-height: 41px; letter-spacing: -.2px; }
.tile span { line-height: 25px; font-size: 16.5px; }
.tile.h1 b { color: #2f5496; font-size: 26px; line-height: 38px; font-weight: 300; letter-spacing: .2px; }
.tile.h2 b { color: #2f5496; font-size: 22px; line-height: 41px; font-weight: 300; }
.tile.ti b { font-size: 46px; line-height: 31px; font-weight: 300; letter-spacing: 0; }
.tile.su b { color: #5a5a5a; letter-spacing: 1.7px; }
.tile.em b { font-style: italic; letter-spacing: .1px; }
.tile.em.dim b { color: #404040; }
.tile.em.blue b { color: #4472c4; }
.gscroll { margin: -1px -1px 0 auto; width: 23px; display: flex; flex-direction: column; }
.gscroll i { flex: none; height: 31px; border: 1px solid #adabaa; display: flex; align-items: center; justify-content: center; background: #f3f2f1; }
.gscroll .dis { border-color: #cfcdcb; }
.gscroll i + i { height: 30px; }
.styles .foot { padding-right: 26px; }
.editing .line { display: flex; align-items: center; height: 34px; padding-left: 15px; gap: 3px; }
.editing .line:first-child { margin-top: -1px; }
.c2 { margin-left: 11px; }
.c3 { margin-left: 1px; }
.big { display: flex; flex-direction: column; align-items: center; margin: 6px 0 0 14px; line-height: 24px; width: 136px; }
.big.r { width: 84px; margin-left: 6px; }
.big svg { margin-bottom: 3px; }
.collapse { position: absolute; left: 2532px; top: 124px; }

.workspace { flex: none; height: 1108px; background: #e6e6e6; }
.hruler text, .vruler text { font-size: 14px; fill: #444; text-anchor: middle; font-family: "Open Sans", sans-serif; }
.desk { height: 1072px; display: flex; position: relative; }
.page { width: 2185px; height: 1072px; background: #fff; border-left: 1px solid #c6c6c6; border-right: 1px solid #c6c6c6; position: relative; overflow: hidden; margin-left: -1px; }
.margins { height: 16px; display: flex; justify-content: space-between; padding: 0 98px 0 101px; }
.ml { width: 46px; border-right: 1px solid #aaa; border-bottom: 1px solid #aaa; }
.mr { width: 47px; border-left: 1px solid #aaa; border-bottom: 1px solid #aaa; }
h1 { margin: 0 0 0 809px; height: 123px; font-weight: 400; }
.heading { display: block; width: 578px; height: 76px; padding-left: 1px; background: #ff0; color: #000; font-size: 47px; line-height: 68px; font-weight: 700; -webkit-text-stroke: 1px #000; font-family: "Khmer OS Muol Light", "Noto Serif Khmer", "Noto Sans Khmer", "Open Sans", serif; }
.sheet { margin-left: 188px; width: 1809px; display: grid; background: #000; gap: 1px; padding: 1px; grid-template-columns: 196px 276px 280px 199px 280px 200px 199px 170px; grid-template-rows: 97px 95px 98px 95px 136px 98px 94px 98px 95px; font: 36.4px "Liberation Sans", Arial, sans-serif; color: #000; }
.cell { display: flex; align-items: center; justify-content: center; overflow: hidden; text-align: center; padding-top: 2px; padding-left: 1px; }
.cell.left { justify-content: flex-start; padding-left: 14px; }
.cell.up { padding-bottom: 25px; }
.cell.two { line-height: 68px; }
.cell.time { font: 700 36.4px/41.500px "Liberation Serif", "Times New Roman", serif; background: #8eaadb; text-align: left; white-space: normal; }
.cell.red { color: #c00000; }
.cell.head { font: italic 700 36.4px "Liberation Serif", "Times New Roman", serif; background: #ffc000; color: #f00; padding-left: 3px; }
.gr { background: #92d050; }
.rd { background: #c00000; color: #fff; }
.ye { background: #ff0; }
.na { background: #002060; color: #fff; }
.wh { background: #fff; }
.or { background: #ed7d31; }
.cy { background: #00b0f0; color: #fff; }
.ye, .line5 { border-bottom: 1px solid #fff; }
.arr { display: inline-block; width: 30px; height: 26px; margin: 0 3px; }
.sq { background: url("data:image/svg+xml,%3Csvg xmlns='http://www.w3.org/2000/svg' width='5' height='5'%3E%3Cpath d='M0,4L2.500,1L5,4' fill='none' stroke='%23a02020' stroke-width='1.200'/%3E%3C/svg%3E") 0 35px repeat-x; line-height: 41px; display: inline-block; }
.rd .sq { background-image: url("data:image/svg+xml,%3Csvg xmlns='http://www.w3.org/2000/svg' width='5' height='5'%3E%3Cpath d='M0,4L2.500,1L5,4' fill='none' stroke='%23f4d0d0' stroke-width='1.200'/%3E%3C/svg%3E"); }
.sq em { font-style: normal; color: #000; }
.cursor { position: absolute; left: 146px; top: 1055px; width: 1px; height: 17px; background: #000; }
.scroll { position: absolute; right: 1px; top: 1px; width: 25px; height: 1070px; background: #dadada; display: flex; flex-direction: column; }
.sb, .thumb { background: #fff; border: 1px solid #ababab; height: 25px; display: flex; align-items: center; justify-content: center; flex: none; }
.thumb { margin-top: 35px; height: 343px; }
.sb.end { margin-top: auto; }

.status { height: 33px; flex: none; border-top: 1px solid #c6c4c2; background: #f3f2f1; display: flex; align-items: center; padding-left: 12px; font-size: 15.5px; }
.s2 { margin-left: 28px; }
.s3 { margin-left: 26px; }
.s4 { margin-left: 24px; }
.s5 { margin: 0 4px 0 26px; }
.views { margin-left: auto; padding-right: 11px; display: flex; align-items: center; height: 32px; }
.views > span { margin-left: 3px; }
.v2 { margin-left: 33px; }
.v3 { margin-left: 19px; width: 60px; height: 32px; background: #d0cecd; display: flex; align-items: center; padding-left: 18px; }
.v4 { margin-left: 18px; }
.v5 { margin-left: 25px; }
.views > span:last-child { margin-left: 18px; }

.taskbar { height: 60px; flex: none; background: #101010; display: flex; color: #fff; }
.app { width: 75px; flex: none; display: flex; align-items: center; justify-content: center; position: relative; }
.app svg { width: 36px; height: 36px; }
.app text { font: 700 20px "Open Sans", sans-serif; text-anchor: middle; }
.app text.jb { font-size: 12px; text-anchor: start; fill: #fff; }
.app text.st { font-size: 7px; }
.app text.wd { font-size: 15px; }
.run::after { content: ""; position: absolute; bottom: 0; left: 8px; width: 60px; height: 3px; background: #9ed2ff; }
.split::after { background: linear-gradient(90deg, #9ed2ff 48px, #7a9db8 48px); }
.cur { background: linear-gradient(90deg, #101010 1px, #333 1px); }
.cur::after { left: 1px; width: 74px; }
.rar { background: linear-gradient(90deg, #101010 8px, #2e602c 8px, #2e602c 67px, #101010 67px); }
.rar::after { background: #49e03c; width: 59px; }
.tray { margin-left: auto; display: flex; align-items: center; font-size: 17px; }
.eng { margin-left: 13px; }
.clock { margin-left: 20px; width: 84px; display: flex; flex-direction: column; align-items: center; line-height: 28px; }
.note { margin-left: 20px; }
.note text { font-family: "Open Sans", sans-serif; }
```
FILE: app.js
```js
// Timetable rows: [time, colour class, day cells as [content, modifiers]]
const arrow = '<svg class="arr" viewBox="0 0 30 26"><use href="#arrow"/></svg>';
const sq = t => `<span class="sq">${t}</span>`;
const jd2 = `<div>${sq('Java+Ds')}<br>${arrow}10:11am</div>`;
const wb = `<div>Web${arrow}10:11am</div>`;
const rows = [
  ['5-6:30 AM', 'gr', [['ENG', 'left'], ['ENG', 'left'], ['ENG', 'left up'], ['ENG', 'left up'], ['ENG', 'left up'], ['ENG', 'left up'], ['ENG', '']]],
  ['6:30-7 AM', 'gr', [...Array(6).fill([sq('R.Book'), 'left']), [sq('R.Book'), '']]],
  ['1-3:30 PM', 'rd', [[sq('Eng'), ''], ...Array(6).fill([sq('Eng'), 'up'])]],
  ['3:30-5 PM', 'rd', [[sq('Java+Ds'), ''], [jd2, 'two'], [sq('Java+Ds'), ''], [jd2, 'two'], [sq('Java+Ds'), ''], [sq('Java+Ds'), ''], [sq('Java<em>+Ds</em>'), 'cy']]],
  ['5-5:45 PM', 'ye', [['Web', ''], [wb, ''], ['Web', ''], [wb, ''], ['Web', ''], ['Web', ''], ['Web', 'cy line5']]],
  ['10:30-11 PM', 'na', [...Array(6).fill(['Net+ A+', '']), ['DS', 'cy']]],
  ['11-12 PM', 'wh', [...Array(6).fill(['GP+VDO', 'left']), ['DS', 'cy']]],
  ['12-1 PM', 'or', [['DB+ASS', 'left'], ...Array(5).fill(['DB+ASS', 'left up']), ['DS', 'cy']]]
];
let html = ['Time', 'Mon', 'Tue', 'Wen', 'Thu', 'Fri', 'Sat', 'Sun'].map(d => `<div class="cell head">${d}</div>`).join('');
rows.forEach(([time, colour, cells], i) => {
  html += `<div class="cell time left ${i < 2 ? 'red' : ''} ${i === 4 ? 'line5' : ''}">${time}</div>`;
  cells.forEach(([text, cls]) => {
    html += `<div class="cell ${cls.includes('cy') ? '' : colour} ${cls}">${text}</div>`;
  });
});
document.getElementById('sheet').innerHTML = html;

// Rulers
const U = 73.6;
let h = '<defs><linearGradient id="sh" x2="0" y2="1"><stop stop-color="#c9c9c9"/><stop offset="1" stop-color="#e2e2e2"/></linearGradient></defs>' +
  '<rect x="0" y="239" width="2560" height="7" fill="url(#sh)"/>' +
  '<rect x="190" y="245" width="148" height="21" fill="#c6c6c6"/><rect x="338" y="245" width="1890" height="21" fill="#fff"/><rect x="2229" y="245" width="147" height="21" fill="#c6c6c6"/>';
for (let q = -8; q <= 110; q++) {
  const x = 337.2 + q * U / 4;
  if (q % 4 === 0) { if (q) h += `<text x="${x}" y="261">${Math.abs(q / 4)}</text>`; }
  else h += q % 2 === 0 ? `<rect x="${Math.round(x)}" y="253" width="1" height="8" fill="#444"/>` : `<rect x="${Math.round(x)}" y="255" width="1" height="3" fill="#444"/>`;
}
h += '<g fill="#fff" stroke="#8a8a8a"><path d="M331.500,242.500H343.500V247L337.500,253.500L331.500,247Z"/><path d="M331.500,268.500V263.500L337.500,257L343.500,263.500V268.500ZM331.500,268.500H343.500V274.500H331.500Z"/><path d="M2223.500,268.500V263.500L2229.500,257L2235.500,263.500V268.500Z"/></g>' +
  '<rect x="0" y="240" width="33" height="32" fill="#cdcdcd"/><rect x="3.500" y="243.500" width="26" height="25" fill="#fff"/><path d="M13,254V262H21" fill="none" stroke="#555" stroke-width="3"/>';
document.getElementById('hruler').innerHTML = h;

let v = '<rect x="5" y="275" width="22" height="17" fill="#c6c6c6"/><rect x="5" y="293" width="22" height="1054" fill="#fff"/>';
for (let q = 1; q <= 57; q++) {
  const y = 290.6 + q * U / 4;
  if (q % 4 === 0) v += `<text transform="translate(22.500 ${y}) rotate(-90)">${q / 4}</text>`;
  else v += q % 2 === 0 ? `<rect x="14" y="${Math.round(y)}" width="8" height="1" fill="#444"/>` : `<rect x="17" y="${Math.round(y)}" width="3" height="1" fill="#444"/>`;
}
document.getElementById('vruler').innerHTML = v;

// Tune letter spacing so labels keep their set widths; the second reading
// accounts for scripts whose spacing is applied per cluster
document.querySelectorAll('[data-w]').forEach(el => {
  const w = +el.dataset.w, r = document.createRange();
  r.selectNodeContents(el);
  const width = () => r.getBoundingClientRect().width;
  const base = width();
  el.style.letterSpacing = '1px';
  const clusters = width() - base;
  el.style.letterSpacing = (w - base) / clusters + 'px';
});
```
